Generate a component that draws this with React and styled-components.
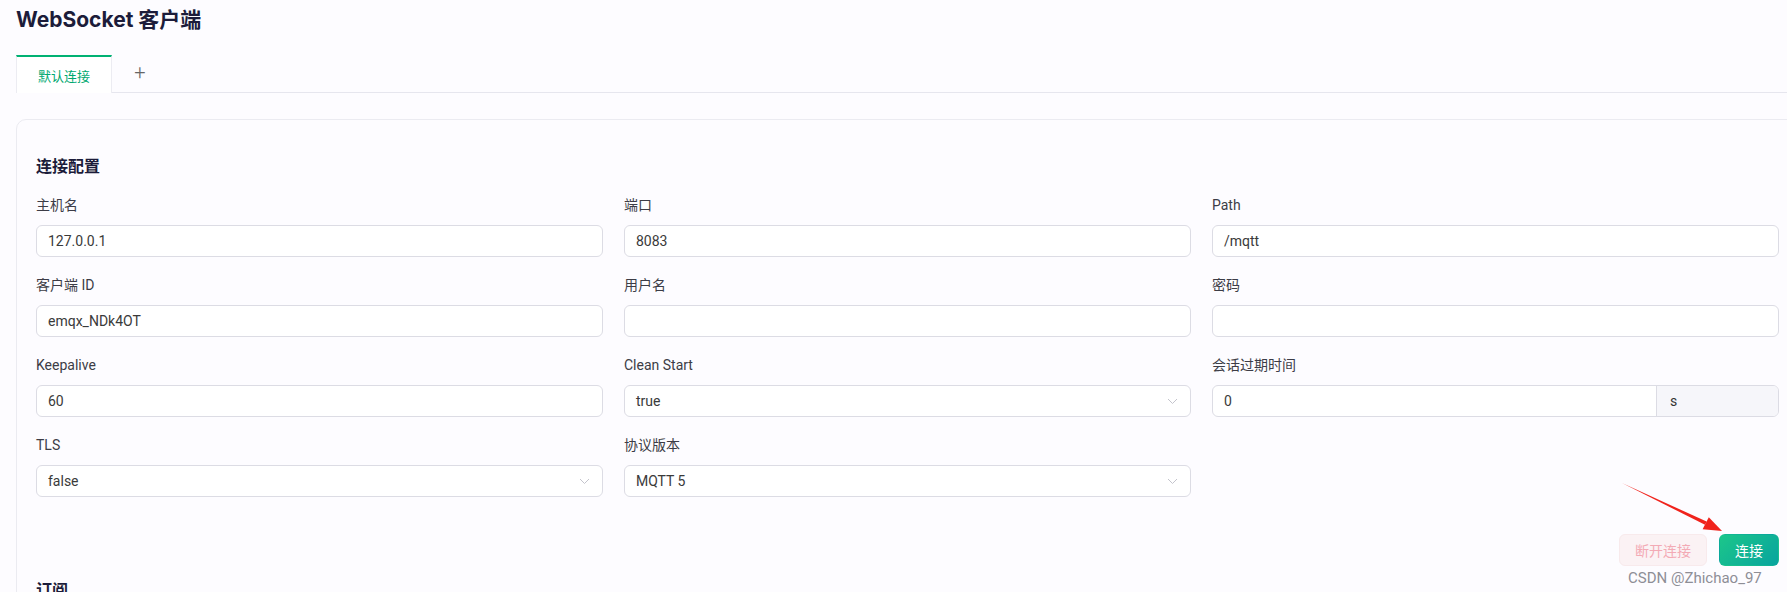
import React from "react";
import styled, { createGlobalStyle } from "styled-components";

const Global = createGlobalStyle`
  html, body { margin: 0; padding: 0; overflow: hidden; background: #fdfcff; }
  body { font-family: Roboto, "Noto Sans CJK SC", sans-serif; color: #333; }
  * { box-sizing: border-box; }
`;

const Page = styled.div`
  position: relative;
  width: 1840px;
  height: 592px;
  padding-left: 16px;
`;

const Title = styled.h1`
  margin: 6px 0 0;
  font-family: Inter, "Noto Sans CJK SC", sans-serif;
  font-size: 21px;
  line-height: 28px;
  font-weight: 700;
  color: #1c1c3a;
`;

const TabBar = styled.div`
  display: flex;
  align-items: stretch;
  margin-top: 21px;
  height: 38px;
  border-bottom: 1px solid #e6e6ee;
`;

const Tab = styled.div`
  width: 96px;
  display: flex;
  align-items: center;
  justify-content: center;
  border-top: 2px solid #00b173;
  border-left: 1px solid #ececf2;
  border-right: 1px solid #ececf2;
  background: #fff;
  margin-bottom: -1px;
  font-size: 13px;
  color: #00a870;
`;

const AddTab = styled.div`
  width: 56px;
  display: flex;
  align-items: center;
  justify-content: center;
  color: #666;
  font-size: 20px;
  font-weight: 300;
  padding-bottom: 4px;
`;

const Card = styled.section`
  margin-top: 26px;
  width: 1800px;
  height: 600px;
  border: 1px solid #ebebf1;
  border-radius: 10px;
  background: #fdfcff;
  padding: 35px 19px 0;
`;

const Content = styled.div`
  width: 1743px;
`;

const SectionTitle = styled.h2`
  margin: ${(p) => p.$top || 0}px 0 0;
  font-size: 16px;
  line-height: 24px;
  font-weight: 700;
  color: #1c1c3a;
`;

const Grid = styled.div`
  margin-top: 16px;
  display: grid;
  grid-template-columns: repeat(3, 567px);
  column-gap: 21px;
  row-gap: 18px;
`;

const Field = styled.div`
  display: flex;
  flex-direction: column;
`;

const Label = styled.label`
  font-size: 14px;
  line-height: 20px;
  color: #3c3c46;
  margin-bottom: 10px;
`;

const Box = styled.div`
  position: relative;
  height: 32px;
  display: flex;
  align-items: center;
  border: 1px solid #dcdce4;
  border-radius: 6px;
  background: #fff;
  overflow: hidden;
`;

const Value = styled.span`
  flex: 1;
  padding: 0 11px;
  font-size: 14px;
  color: #3a3a3a;
`;

const Append = styled.span`
  width: 122px;
  align-self: stretch;
  display: flex;
  align-items: center;
  padding-left: 13px;
  background: #f6f6fa;
  border-left: 1px solid #dcdce4;
  font-size: 14px;
  color: #333;
`;

const Chevron = styled.svg`
  width: 11px;
  height: 7px;
  margin-right: 12px;
  flex: none;
`;

const ButtonRow = styled.div`
  margin-top: 37px;
  display: flex;
  justify-content: flex-end;
  gap: 12px;
`;

const Button = styled.button`
  height: 32px;
  padding: 0 15px;
  border-radius: 6px;
  font-family: inherit;
  font-size: 14px;
  border: 1px solid ${(p) => (p.$primary ? "transparent" : "#f8eaec")};
  background: ${(p) =>
    p.$primary ? "linear-gradient(135deg, #1cc68a 0%, #08a49e 100%)" : "#fbf2f4"};
  color: ${(p) => (p.$primary ? "#fff" : "#f3aab5")};
`;

const Watermark = styled.div`
  position: absolute;
  left: 1628px;
  top: 562px;
  font-family: Roboto, sans-serif;
  font-size: 15px;
  line-height: 20px;
  color: #8e8e96;
  white-space: nowrap;
`;

const Overlay = styled.svg`
  position: absolute;
  left: 0;
  top: 0;
  pointer-events: none;
`;

const ChevronIcon = () => (
  <Chevron viewBox="0 0 11 7">
    <path d="M1 1l4.5 4.5L10 1" fill="none" stroke="#c4c4cc" strokeWidth="1" />
  </Chevron>
);

const fields = [
  { label: "主机名", value: "127.0.0.1" },
  { label: "端口", value: "8083" },
  { label: "Path", value: "/mqtt" },
  { label: "客户端 ID", value: "emqx_NDk4OT" },
  { label: "用户名", value: "" },
  { label: "密码", value: "" },
  { label: "Keepalive", value: "60" },
  { label: "Clean Start", value: "true", select: true },
  { label: "会话过期时间", value: "0", append: "s" },
  { label: "TLS", value: "false", select: true },
  { label: "协议版本", value: "MQTT 5", select: true },
];

export default function App() {
  return (
    <>
      <Global />
      <Page>
        <Title>WebSocket 客户端</Title>
        <TabBar>
          <Tab>默认连接</Tab>
          <AddTab>+</AddTab>
        </TabBar>
        <Card>
          <Content>
            <SectionTitle>连接配置</SectionTitle>
            <Grid>
              {fields.map((f) => (
                <Field key={f.label}>
                  <Label>{f.label}</Label>
                  <Box>
                    <Value>{f.value}</Value>
                    {f.select && <ChevronIcon />}
                    {f.append && <Append>{f.append}</Append>}
                  </Box>
                </Field>
              ))}
            </Grid>
            <ButtonRow>
              <Button>断开连接</Button>
              <Button $primary>连接</Button>
            </ButtonRow>
            <SectionTitle $top={13}>订阅</SectionTitle>
          </Content>
        </Card>
        <Watermark>CSDN @Zhichao_97</Watermark>
        <Overlay width="1787" height="592" viewBox="0 0 1787 592">
          <polygon points="1622,477 1706.6,515.6 1705,518.8" fill="#f0231c" />
          <polygon points="1722,525 1702.6,523.2 1708.8,511.2" fill="#f0231c" />
        </Overlay>
      </Page>
    </>
  );
}
